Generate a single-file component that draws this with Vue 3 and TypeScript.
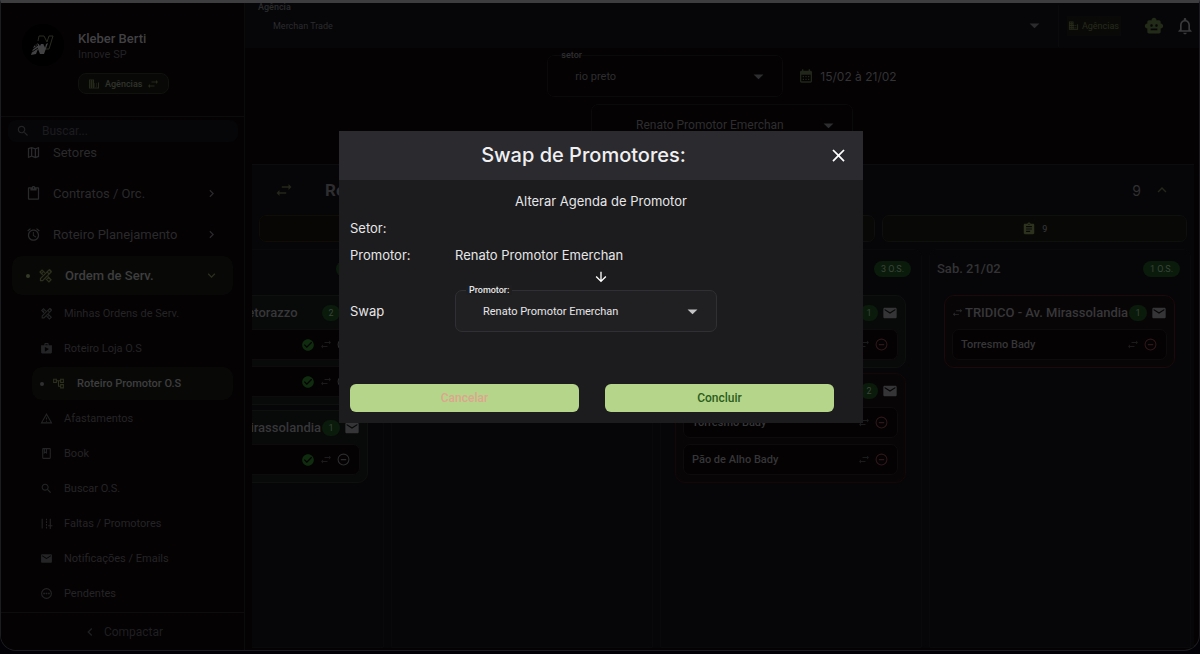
<script setup lang="ts">
import { h, ref } from 'vue'

const paths: Record<string, string> = {
  swap: 'M22 8l-4-4v3H9v2h9v3l4-4zM2 16l4 4v-3h9v-2H6v-3l-4 4z',
  business: 'M12 7V3H2v18h20V9H12V7zM6 19H4v-2h2v2zm0-4H4v-2h2v2zm0-4H4V9h2v2zm0-4H4V5h2v2zm4 12H8v-2h2v2zm0-4H8v-2h2v2zm0-4H8V9h2v2zm0-4H8V5h2v2zm10 12h-8v-2h2v-2h-2v-2h2v-2h-2V9h8v10zm-2-8h-2v2h2v-2zm0 4h-2v2h2v-2z',
  search: 'M15.5 14h-.79l-.28-.27C15.41 12.59 16 11.11 16 9.5 16 5.91 13.09 3 9.5 3S3 5.91 3 9.5 5.91 16 9.5 16c1.61 0 3.09-.59 4.23-1.57l.27.28v.79l5 4.99L20.49 19l-4.99-5zm-6 0C7.01 14 5 11.99 5 9.5S7.01 5 9.5 5 14 7.01 14 9.5 11.99 14 9.5 14z',
  map: 'M20.5 3l-.16.03L15 5.1 9 3 3.36 4.9c-.21.07-.36.25-.36.48V20.5c0 .28.22.5.5.5l.16-.03L9 18.9l6 2.1 5.64-1.9c.21-.07.36-.25.36-.48V3.5c0-.28-.22-.5-.5-.5zM10 5.47l4 1.4v11.66l-4-1.4V5.47zm-5 .99l3-1.01v11.7l-3 1.16V6.46zm14 11.08l-3 1.01V6.86l3-1.16v11.84z',
  clipboard: 'M19 2h-4.18C14.4.84 13.3 0 12 0S9.6.84 9.18 2H5c-1.1 0-2 .9-2 2v16c0 1.1.9 2 2 2h14c1.1 0 2-.9 2-2V4c0-1.1-.9-2-2-2zm-7 0c.55 0 1 .45 1 1s-.45 1-1 1-1-.45-1-1 .45-1 1-1zm7 18H5V4h2v3h10V4h2v16z',
  alarm: 'M22 5.72l-4.6-3.86-1.29 1.53 4.6 3.86L22 5.72zM7.88 3.39L6.6 1.86 2 5.71l1.29 1.53 4.59-3.85zM12.5 8H11v6l4.75 2.85.75-1.23-4-2.37V8zM12 4c-4.97 0-9 4.03-9 9s4.02 9 9 9c4.97 0 9-4.03 9-9s-4.03-9-9-9zm0 16c-3.87 0-7-3.13-7-7s3.13-7 7-7 7 3.13 7 7-3.13 7-7 7z',
  tools: 'M6.5 1.8L1.8 6.5l5 5 1.4-1.4L6.9 8.8l1.5-1.5L7 5.9 5.500 7.400 4.600 6.500 6.500 4.600l3.600 3.600 1.400-1.400zM15.800 12.500l-1.400 1.400 1.300 1.300-1.500 1.500 1.400 1.400 1.500-1.500 2.300 2.300-1.900 1.900-5-5-1.400 1.400 6.400 6.400 4.700-4.700zM17 2.300a2 2 0 0 1 2.800 0l1.900 1.900a2 2 0 0 1 0 2.800L7.700 21H3v-4.700zM17.700 4.400L15.900 6.200l1.900 1.900 1.800-1.800zM14.500 7.600L5 17.100V19h1.900l9.500-9.500z',
  shop: 'M16 6V4c0-1.11-.89-2-2-2h-4c-1.11 0-2 .89-2 2v2H2v13c0 1.11.89 2 2 2h16c1.11 0 2-.89 2-2V6h-6zm-6-2h4v2h-4V4zM9 18V9l7.500 4L9 18z',
  tree: 'M22 11V3h-7v3H9V3H2v8h7V8h2v10h4v3h7v-8h-7v3h-2V8h2v3h7zM7 9H4V5h3v4zm10 6h3v4h-3v-4zm0-10h3v4h-3V5z',
  warning: 'M12 5.990L19.530 19H4.470L12 5.990M12 2L1 21h22L12 2zm1 14h-2v2h2v-2zm0-6h-2v4h2v-4z',
  book: 'M18 2H6c-1.100 0-2 .9-2 2v16c0 1.100.9 2 2 2h12c1.100 0 2-.9 2-2V4c0-1.100-.9-2-2-2zM9 4h2v5l-1-.75L9 9V4zm9 16H6V4h1v9l3-2.250L13 13V4h5v16z',
  faults: 'M3 3h2v18H3zM11 3h2v3h-2zM11 8h2v3h-2zM11 13h2v3h-2zM11 18h2v3h-2zM18 3h2v12h3v2h-3v5h-2v-5h-3v-2h3z',
  mail: 'M20 4H4c-1.100 0-1.990.9-1.990 2L2 18c0 1.100.9 2 2 2h16c1.100 0 2-.9 2-2V6c0-1.100-.9-2-2-2zm0 4l-8 5-8-5V6l8 5 8-5v2z',
  pending: 'M12 2a10 10 0 1 0 0 20a10 10 0 1 0 0-20zm0 2a8 8 0 1 1 0 16a8 8 0 1 1 0-16zM6 10.700h3v2.600H6zM10.500 10.700h3v2.600h-3zM15 10.700h3v2.600h-3z',
  calendar: 'M19 4h-1V2h-2v2H8V2H6v2H5c-1.110 0-1.990.9-1.990 2L3 20c0 1.100.89 2 2 2h14c1.100 0 2-.9 2-2V6c0-1.100-.9-2-2-2zm0 16H5V10h14v10zM9 14H7v-2h2v2zm4 0h-2v-2h2v2zm4 0h-2v-2h2v2zm-8 4H7v-2h2v2zm4 0h-2v-2h2v2zm4 0h-2v-2h2v2z',
  robot: 'M20 9V7c0-1.100-.9-2-2-2h-3c0-1.660-1.340-3-3-3S9 3.340 9 5H6c-1.100 0-2 .9-2 2v2c-1.660 0-3 1.340-3 3s1.340 3 3 3v4c0 1.100.9 2 2 2h12c1.100 0 2-.9 2-2v-4c1.660 0 3-1.340 3-3s-1.340-3-3-3zM7.500 11.500c0-.83.67-1.500 1.500-1.500s1.500.67 1.500 1.500S9.830 13 9 13s-1.500-.67-1.500-1.500zM16 17H8v-2h8v2zm-1-4c-.83 0-1.500-.67-1.500-1.500S14.170 10 15 10s1.500.67 1.500 1.500S15.830 13 15 13z',
  bell: 'M12 22c1.100 0 2-.9 2-2h-4c0 1.100.89 2 2 2zm6-6v-5c0-3.070-1.630-5.640-4.500-6.320V4c0-.83-.67-1.500-1.500-1.500s-1.500.67-1.500 1.500v.68C7.640 5.360 6 7.920 6 11v5l-2 2v1h16v-1l-2-2zm-2 1H8v-6c0-2.480 1.510-4.500 4-4.500s4 2.020 4 4.500v6z',
  task: 'M19 3h-4.180C14.400 1.840 13.300 1 12 1c-1.300 0-2.400.84-2.820 2H5c-1.100 0-2 .9-2 2v14c0 1.100.9 2 2 2h14c1.100 0 2-.9 2-2V5c0-1.100-.9-2-2-2zm-7 0c.55 0 1 .45 1 1s-.45 1-1 1-1-.45-1-1 .45-1 1-1zm2 14H7v-2h7v2zm3-4H7v-2h10v2zm0-4H7V7h10v2z',
  check: 'M12 2C6.480 2 2 6.480 2 12s4.480 10 10 10 10-4.480 10-10S17.520 2 12 2zm-2 15l-5-5 1.410-1.410L10 14.170l7.590-7.590L19 8l-9 9z',
  minus: 'M12 1a11 11 0 1 0 0 22a11 11 0 1 0 0-22zm0 2a9 9 0 1 1 0 18a9 9 0 1 1 0-18zM7 11h10v2.500H7z',
  right: 'M8.590 16.590L13.170 12 8.590 7.410 10 6l6 6-6 6z',
  left: 'M15.410 7.410L14 6l-6 6 6 6 1.410-1.410L10.830 12z',
  down: 'M16.590 8.590L12 13.170 7.410 8.590 6 10l6 6 6-6z',
  up: 'M12 8l-6 6 1.410 1.410L12 10.830l4.590 4.580L18 14z',
  caret: 'M5 9l7 7 7-7z',
  arrow: 'M20 12l-1.410-1.410L13 16.170V4h-2v12.170l-5.580-5.590L4 12l8 8z',
  close: 'M19 6.410L17.590 5 12 10.590 6.410 5 5 6.410 10.590 12 5 17.590 6.410 19 12 13.410 17.590 19 19 17.590 13.410 12z',
}

const Icon = (props: { name: string }) =>
  h('svg', { viewBox: '0 0 24 24', 'aria-hidden': 'true', class: 'icon' }, [
    h('path', { d: paths[props.name], 'fill-rule': 'evenodd' }),
  ])
Icon.props = ['name']

const menu = [
  { icon: 'map', label: 'Setores', chevron: '' },
  { icon: 'clipboard', label: 'Contratos / Orc.', chevron: 'right' },
  { icon: 'alarm', label: 'Roteiro Planejamento', chevron: 'right' },
  { icon: 'tools', label: 'Ordem de Serv.', chevron: 'down', active: true },
]
const submenu = [
  { icon: 'tools', label: 'Minhas Ordens de Serv.' },
  { icon: 'shop', label: 'Roteiro Loja O.S' },
  { icon: 'tree', label: 'Roteiro Promotor O.S', active: true },
  { icon: 'warning', label: 'Afastamentos' },
  { icon: 'book', label: 'Book' },
  { icon: 'search', label: 'Buscar O.S.' },
  { icon: 'faults', label: 'Faltas / Promotores' },
  { icon: 'mail', label: 'Notificações / Emails' },
  { icon: 'pending', label: 'Pendentes' },
]

interface Item { name: string; done?: boolean }
interface Card { name: string; tone: string; items: Item[] }
interface Column { day: string; count: number; cards: Card[] }

const columns: Column[] = [
  {
    day: 'Qua. 18/02', count: 3,
    cards: [
      { name: 'TRIDICO - Av. Petorazzo', tone: 'done', items: [{ name: 'Torresmo Bady', done: true }, { name: 'Pão de Alho Bady', done: true }] },
      { name: 'TRIDICO - Av. Mirassolandia', tone: 'done', items: [{ name: 'Torresmo Bady', done: true }] },
    ],
  },
  { day: 'Qui. 19/02', count: 0, cards: [] },
  {
    day: 'Sex. 20/02', count: 3,
    cards: [
      { name: 'TRIDICO - Av. Mirassolandia', tone: 'plain', items: [{ name: 'Torresmo Bady' }] },
      { name: 'TRIDICO - Av. Petorazzo', tone: 'late', items: [{ name: 'Torresmo Bady' }, { name: 'Pão de Alho Bady' }] },
    ],
  },
  {
    day: 'Sab. 21/02', count: 1,
    cards: [{ name: 'TRIDICO - Av. Mirassolandia', tone: 'late bright', items: [{ name: 'Torresmo Bady' }] }],
  },
]

const promoter = 'Renato Promotor Emerchan'
const open = ref(true)
const search = ref('')
</script>

<template>
  <div class="shell">
    <div class="window">
      <aside class="sidebar">
        <div class="profile">
          <svg class="avatar" viewBox="0 0 42 42" aria-hidden="true">
            <circle cx="21" cy="21" r="21" fill="#000" />
            <path d="M16 17l1-5h5l3 6 2-6h4l-4 13h-4l-2-5" fill="none" stroke="#2a2c20" stroke-width="1" />
            <path d="M9 31l3-9 4-3 2 3 1-2h2l2 4 1-4 2-1-4 11h-4l-2-5-2 5z" fill="#424244" />
            <path d="M11 25l5-4M10 28l6-4M13 22l4-3" stroke="#050505" stroke-width="1" />
          </svg>
          <div class="who">
            <strong>Kleber Berti</strong>
            <span>Innove SP</span>
            <button type="button" class="agency"><Icon name="business" />Agências<Icon name="swap" /></button>
          </div>
        </div>
        <label class="search">
          <Icon name="search" />
          <input v-model="search" type="text" placeholder="Buscar..." aria-label="Buscar">
        </label>
        <nav class="nav">
          <a v-for="m in menu" :key="m.label" href="#" class="row" :class="{ active: m.active }">
            <i v-if="m.active" class="dot"></i>
            <Icon :name="m.icon" />
            <span>{{ m.label }}</span>
            <Icon v-if="m.chevron" :name="m.chevron" class="chevron" />
          </a>
          <a v-for="s in submenu" :key="s.label" href="#" class="row sub" :class="{ active: s.active }">
            <i v-if="s.active" class="dot"></i>
            <Icon :name="s.icon" />
            <span>{{ s.label }}</span>
          </a>
        </nav>
        <button type="button" class="collapse"><Icon name="left" />Compactar</button>
      </aside>

      <main class="main">
        <header class="topbar">
          <div class="field agency-field">
            <label for="agency">Agência</label>
            <select id="agency"><option>Merchan Trade</option></select>
            <Icon name="caret" />
          </div>
          <button type="button" class="agency-link"><Icon name="business" />Agências</button>
          <button type="button" class="tool robot" aria-label="Assistente"><Icon name="robot" /></button>
          <button type="button" class="tool bell" aria-label="Notificações"><Icon name="bell" /></button>
        </header>

        <div class="filters">
          <div class="field sector">
            <label for="sector">setor</label>
            <select id="sector"><option>rio preto</option></select>
            <Icon name="caret" />
          </div>
          <button type="button" class="dates"><Icon name="calendar" />15/02 à 21/02</button>
        </div>
        <div class="filters second">
          <div class="field person">
            <select aria-label="Promotor da agenda"><option>{{ promoter }}</option></select>
            <Icon name="caret" />
          </div>
        </div>

        <section class="panel">
          <div class="panel-head">
            <Icon name="swap" />
            <h2>{{ promoter }}</h2>
            <span class="total">9</span>
            <Icon name="up" />
          </div>
          <div class="tabs">
            <button type="button" class="tab warm" aria-label="Atrasadas"></button>
            <button type="button" class="tab cool" aria-label="Concluídas"></button>
            <button type="button" class="tab olive"><Icon name="task" />9</button>
          </div>
          <div class="board">
            <section v-for="c in columns" :key="c.day" class="column">
              <header>
                <h3>{{ c.day }}</h3>
                <span class="pill wide">{{ c.count }} O.S.</span>
              </header>
              <article v-for="(card, i) in c.cards" :key="i" class="card" :class="card.tone">
                <div class="card-head">
                  <Icon name="swap" />
                  <h4>{{ card.name }}</h4>
                  <span class="pill">{{ card.items.length }}</span>
                  <Icon name="mail" />
                </div>
                <div v-for="item in card.items" :key="item.name" class="item">
                  <span>{{ item.name }}</span>
                  <Icon v-if="item.done" name="check" class="ok" />
                  <Icon name="swap" class="move" />
                  <Icon name="minus" class="remove" />
                </div>
              </article>
            </section>
          </div>
        </section>
      </main>
    </div>

    <div v-if="open" class="overlay">
      <section class="modal" role="dialog" aria-modal="true" aria-labelledby="swap-title">
        <header>
          <h1 id="swap-title">Swap de Promotores:</h1>
          <button type="button" aria-label="Fechar" @click="open = false"><Icon name="close" /></button>
        </header>
        <div class="content">
          <p class="lead">Alterar Agenda de Promotor</p>
          <div class="line"><span>Setor:</span></div>
          <div class="line"><span>Promotor:</span><span>{{ promoter }}</span></div>
          <Icon name="arrow" class="arrow" />
          <div class="line swap-line">
            <span>Swap</span>
            <div class="field target">
              <label for="target">Promotor:</label>
              <select id="target"><option>{{ promoter }}</option></select>
              <Icon name="caret" />
            </div>
          </div>
          <div class="actions">
            <button type="button" class="cancel" @click="open = false">Cancelar</button>
            <button type="button" class="confirm" @click="open = false">Concluir</button>
          </div>
        </div>
      </section>
    </div>
  </div>
</template>

<style>
body {
  margin: 0;
  background: #000;
}
</style>

<style scoped>
* {
  box-sizing: border-box;
}
.shell {
  height: 100vh;
  padding-bottom: 3px;
  background: #020206;
  font-family: Roboto, "Liberation Sans", sans-serif;
  color: #343436;
  overflow: hidden;
}
.window {
  display: flex;
  height: 100%;
  border: 1px solid #1c1c20;
  border-top: 3px solid #3d3d3f;
  border-radius: 0 0 16px 16px;
  background: #040203;
  overflow: hidden;
}
h1, h2, h3, h4, p {
  margin: 0;
}
button, select, input {
  font: inherit;
  color: inherit;
  background: none;
  border: 0;
  padding: 0;
}
button {
  display: flex;
  align-items: center;
  justify-content: center;
  cursor: pointer;
}
a {
  color: inherit;
  text-decoration: none;
}
.icon {
  width: 14px;
  height: 14px;
  fill: currentColor;
  flex: none;
}

.sidebar {
  display: flex;
  flex-direction: column;
  width: 244px;
  flex: none;
  border-right: 1px solid #0c0b0c;
  background: #040203;
}
.profile {
  display: flex;
  gap: 14px;
  height: 114px;
  padding: 21px 21px 0;
  border-bottom: 1px solid #0d0c0d;
  flex: none;
}
.avatar {
  width: 42px;
  height: 42px;
}
.who {
  display: flex;
  flex-direction: column;
  align-items: flex-start;
  padding-top: 7px;
  font-size: 11px;
  line-height: 16px;
  color: #222123;
}
.who strong {
  font-size: 13px;
  font-weight: 500;
  color: #414143;
}
.agency {
  gap: 5px;
  height: 21px;
  margin-top: 10px;
  padding: 0 9px;
  border: 1px solid #10120e;
  border-radius: 8px;
  background: #080907;
  font-size: 9px;
  font-weight: 500;
  color: #31332b;
}
.agency .icon {
  width: 12px;
  height: 12px;
  fill: #25291a;
}
.search {
  display: flex;
  align-items: center;
  gap: 12px;
  height: 22px;
  margin: 3px 6px 0 7px;
  padding: 0 8px;
  border-radius: 8px;
  background: #060609;
  font-size: 12px;
  color: #232325;
  flex: none;
}
.search input {
  width: 100%;
  min-width: 0;
  outline: none;
}
.search input::placeholder {
  color: #1c1c1e;
}
.nav {
  display: flex;
  flex-direction: column;
  gap: 2px;
  flex: 1;
  min-height: 0;
  margin-top: -9px;
  padding: 0 11px;
  overflow: hidden;
}
.row {
  display: flex;
  align-items: center;
  gap: 12px;
  height: 39px;
  padding: 0 14px;
  border-radius: 10px;
  font-size: 13px;
  color: #2a2a2c;
  flex: none;
}
.row .icon {
  width: 15px;
  height: 15px;
}
.row span {
  flex: 1;
}
.row.active {
  gap: 12px;
  background: #080907;
  font-weight: 500;
  color: #3e3e3f;
}
.row.active .icon {
  fill: #2c301d;
}
.dot {
  width: 4px;
  height: 4px;
  margin-right: -4px;
  border-radius: 50%;
  background: #353a28;
}
.sub {
  height: 33px;
  margin-left: 20px;
  padding: 0 8px;
  gap: 11px;
  font-size: 11px;
  color: #242426;
}
.sub .icon {
  width: 13px;
  height: 13px;
}
.sub.active .dot {
  background: #303032;
}
.collapse {
  gap: 6px;
  height: 38px;
  border-top: 1px solid #0e0d0e;
  font-size: 12px;
  color: #1f1f21;
  flex: none;
}
.collapse .icon {
  width: 16px;
  height: 16px;
}

.main {
  display: flex;
  flex-direction: column;
  flex: 1;
  min-width: 0;
}
.topbar {
  display: flex;
  align-items: center;
  height: 45px;
  padding-right: 4px;
  background: #060608;
  flex: none;
}
.field {
  position: relative;
  display: flex;
  align-items: center;
  height: 42px;
  padding: 0 15px 0 27px;
  border: 1px solid #0b0a0b;
  border-radius: 7px;
  font-size: 11px;
}
.field label {
  position: absolute;
  top: -6px;
  left: 10px;
  padding: 0 3px;
  font-size: 9px;
  line-height: 10px;
  font-weight: 500;
}
.field select {
  flex: 1;
  min-width: 0;
  appearance: none;
  outline: none;
}
.field .icon {
  width: 17px;
  height: 17px;
}
.agency-field {
  flex: 1;
  padding-left: 28px;
  border-width: 0 1px 0 0;
  border-radius: 0;
  font-size: 9px;
  color: #2b2b2d;
}
.agency-field label {
  top: -3px;
}
.agency-link {
  gap: 3px;
  height: 20px;
  margin: 0 23px 0 8px;
  padding: 0 2px 0 1px;
  background: #090a07;
  font-size: 9px;
  color: #272b1b;
}
.agency-link .icon {
  width: 11px;
  height: 11px;
}
.robot {
  margin-right: 11px;
  color: #222a18;
}
.tool .icon {
  width: 20px;
  height: 20px;
}
.bell {
  color: #3a3a3c;
}
.filters {
  display: flex;
  justify-content: center;
  gap: 15px;
  padding-top: 7px;
}
.second {
  padding-top: 7px;
}
.sector {
  width: 236px;
  color: #2e2e30;
}
.dates {
  gap: 6px;
  font-family: Inter, sans-serif;
  font-size: 12px;
  color: #333335;
}
.dates .icon {
  width: 16px;
  height: 16px;
  fill: #20261a;
}
.person {
  width: 262px;
  padding-left: 44px;
  font-size: 12px;
  color: #2e2e30;
}

.panel {
  display: flex;
  flex-direction: column;
  flex: 1;
  min-height: 0;
  margin: 18px 5px 2px 7px;
  border-top: 1px solid #0c0c0e;
  background: #060608;
}
.panel-head {
  display: flex;
  align-items: center;
  height: 50px;
  padding: 0 23px;
  color: #242719;
  flex: none;
}
.panel-head .icon {
  width: 18px;
  height: 18px;
}
.panel-head h2 {
  flex: 1;
  margin-left: 32px;
  font-size: 17px;
  color: #2e2e30;
}
.total {
  margin-right: 12px;
  font-family: Inter, sans-serif;
  font-size: 14px;
  color: #303032;
}
.tabs {
  display: grid;
  grid-template-columns: repeat(3, 1fr);
  gap: 7px;
  padding: 0 7px;
}
.tab {
  gap: 6px;
  height: 27px;
  border: 1px solid #0e100c;
  border-radius: 7px;
  background: #080907;
  font-size: 9px;
  color: #3a3a3a;
}
.tab.warm {
  border-color: #100c06;
  background: #080604;
}
.tab .icon {
  fill: #2c321e;
}
.board {
  display: flex;
  justify-content: flex-end;
  gap: 7px;
  flex: 1;
  min-height: 0;
  margin-top: 7px;
  padding-right: 3px;
  overflow: hidden;
}
.column {
  display: flex;
  flex-direction: column;
  gap: 5px;
  width: 262px;
  flex: none;
  padding: 0 15px 0 14px;
  border: 1px solid #09090c;
  border-radius: 8px 8px 0 0;
}
.column header {
  display: flex;
  align-items: center;
  justify-content: space-between;
  height: 37px;
  margin: 0 -5px 3px -7px;
}
.column h3 {
  font-size: 13px;
  font-weight: 500;
  color: #333335;
}
.pill {
  display: flex;
  align-items: center;
  justify-content: center;
  width: 18px;
  height: 16px;
  border-radius: 8px;
  background: #0a1b0b;
  font-size: 9px;
  color: #39453a;
  flex: none;
}
.pill.wide {
  width: 37px;
}
.card {
  display: flex;
  flex-direction: column;
  gap: 6px;
  padding: 0 7px 7px;
  border: 1px solid #0e100e;
  border-radius: 10px;
  background: #080909;
}
.card.late {
  border-color: #130708;
  background: #080507;
}
.card.bright {
  border-color: #1b090b;
}
.card-head {
  display: flex;
  align-items: center;
  height: 33px;
  margin-bottom: -6px;
}
.card-head h4 {
  flex: 1;
  min-width: 0;
  margin-left: 2px;
  font-size: 13px;
  font-weight: 500;
  color: #373739;
  white-space: nowrap;
}
.card-head .icon {
  width: 11px;
  height: 11px;
  fill: #2b2b2d;
}
.card-head .pill + .icon {
  width: 16px;
  height: 16px;
  margin-left: 4px;
  fill: #353537;
}
.item {
  display: flex;
  align-items: center;
  gap: 5px;
  height: 31px;
  padding: 0 9px 0 8px;
  border: 1px solid #0e0b0c;
  border-radius: 7px;
  background: #040203;
  font-size: 11px;
  font-weight: 500;
  color: #363638;
}
.item span {
  flex: 1;
}
.item .icon {
  width: 13px;
  height: 13px;
}
.item .ok {
  width: 14px;
  height: 14px;
  fill: #102c0f;
}
.item .move {
  width: 12px;
  fill: #1b1b1d;
}
.item .remove {
  fill: #2f1719;
}
.done .remove {
  fill: #2c2c2e;
}

.overlay {
  position: fixed;
  inset: 0;
  display: flex;
  justify-content: center;
  align-items: flex-start;
  padding: 131px 16px 16px 18px;
}
.modal {
  width: 524px;
  background: #1c1c1e;
  font-family: Inter, sans-serif;
  font-size: 13px;
  line-height: 27px;
  color: #e6e6e8;
}
.modal header {
  display: flex;
  align-items: center;
  height: 49px;
  padding-right: 14px;
  background: #2b2b2f;
}
.modal h1 {
  flex: 1;
  text-align: center;
  font-size: 20px;
  font-weight: 500;
  color: #f0f0f2;
}
.modal header .icon {
  width: 21px;
  height: 21px;
  fill: #fff;
}
.content {
  display: flex;
  flex-direction: column;
  padding: 8px 11px 11px;
}
.lead {
  text-align: center;
}
.line {
  display: grid;
  grid-template-columns: 105px 1fr;
  align-items: center;
  min-height: 27px;
}
.arrow {
  width: 16px;
  height: 16px;
  align-self: center;
  fill: #fff;
}
.swap-line {
  margin-top: 5px;
}
.target {
  width: 262px;
  border-color: #303034;
  background: #202023;
  font-family: Roboto, sans-serif;
}
.target label {
  background: #1e1e20;
}
.target .icon {
  fill: #c4c4c6;
}
.actions {
  display: grid;
  grid-template-columns: 1fr 1fr;
  gap: 26px;
  margin-top: 52px;
  padding-right: 18px;
}
.actions button {
  height: 28px;
  border-radius: 6px;
  background: #b5d58a;
  font-family: Roboto, sans-serif;
  font-size: 12px;
  font-weight: 500;
}
.actions .cancel {
  color: #dfa58e;
}
.actions .confirm {
  color: #2b5d1c;
}
</style>
